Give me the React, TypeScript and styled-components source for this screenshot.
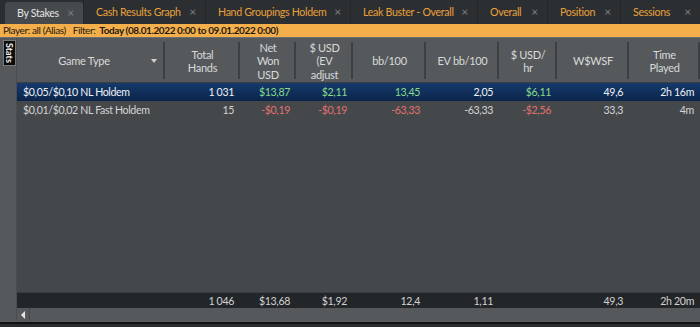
import React from "react";
import styled, { createGlobalStyle } from "styled-components";

const Global = createGlobalStyle`
  html, body { margin: 0; padding: 0; background: #1c1e20; }
  body { font-family: Lato, "Noto Sans", "Liberation Sans", sans-serif; }
  * { box-sizing: border-box; }
`;

const COLS = "148px 75px 56px 57px 73px 73px 58px 72px 71px";

const Root = styled.div`
  width: 700px;
  height: 327px;
  display: flex;
  flex-direction: column;
  background: #1c1e20;
  overflow: hidden;
  font-size: 10.5px;
  letter-spacing: -0.3px;
`;

const TabBar = styled.div`
  height: 24px;
  flex: none;
  display: flex;
  align-items: flex-end;
  background: #2b2e31;
  padding-left: 5px;
  white-space: nowrap;
`;

const Tab = styled.div<{ $active?: boolean; $w: number }>`
  width: ${(p) => p.$w}px;
  height: ${(p) => (p.$active ? "22px" : "24px")};
  display: flex;
  align-items: center;
  justify-content: space-between;
  padding: 0 9px 0 12px;
  background: ${(p) => (p.$active ? "#474a4d" : "#2c2f32")};
  border-radius: ${(p) => (p.$active ? "3px 3px 0 0" : "0")};
  border-left: ${(p) => (p.$active ? "none" : "1px solid #25282a")};
  color: ${(p) => (p.$active ? "#e4e4e4" : "#eaa03a")};
  font-size: 10.6px;
  letter-spacing: -0.3px;
  flex: none;
  overflow: hidden;
`;

const Close = styled.span`
  color: #7d8185;
  font-size: 12px;
  line-height: 1;
`;

const FilterBar = styled.div`
  height: 14px;
  flex: none;
  background: #f4ae4a;
  color: #1d1a14;
  font-size: 10px;
  letter-spacing: -0.4px;
  line-height: 13px;
  padding-left: 3px;
  white-space: nowrap;
  border-bottom: 1px solid #6b6e70;
`;

const Strong = styled.span<{ $bold?: boolean; $ml: number }>`
  font-weight: ${(p) => (p.$bold ? 700 : 400)};
  margin-left: ${(p) => p.$ml}px;
`;

const Main = styled.div`
  flex: 1;
  display: flex;
  min-height: 0;
`;

const SideStrip = styled.div`
  width: 17px;
  flex: none;
  background: #56595c;
  padding: 2px 0 0 3px;
  border-right: 1px solid #4a4d50;
`;

const StatsLabel = styled.div`
  width: 13px;
  height: 26px;
  background: #0c0c0c;
  color: #f2f2f2;
  font-size: 9px;
  letter-spacing: 0;
  font-weight: 700;
  writing-mode: vertical-rl;
  display: flex;
  align-items: center;
  justify-content: center;
  border: 1px solid #777;
`;

const Grid = styled.div`
  flex: 1;
  display: flex;
  flex-direction: column;
  min-width: 0;
`;

const HeaderRow = styled.div`
  height: 45px;
  flex: none;
  display: grid;
  grid-template-columns: ${COLS};
  background: #55595c;
  border-bottom: 1px solid #3c3f42;
`;

const HeadCell = styled.div<{ $pr?: number }>`
  position: relative;
  display: flex;
  align-items: center;
  justify-content: center;
  text-align: center;
  color: #d9d9d9;
  font-size: 11px;
  line-height: 13.5px;
  padding: 2px ${(p) => p.$pr ?? 0}px 0 0;
  overflow: hidden;
  &::after {
    content: "";
    position: absolute;
    right: 0;
    top: 4px;
    bottom: 3px;
    width: 2px;
    background: #3d4043;
  }
`;

const SortArrow = styled.span`
  position: absolute;
  right: 8px;
  top: 21px;
  width: 0;
  height: 0;
  border-left: 3.5px solid transparent;
  border-right: 3.5px solid transparent;
  border-top: 4px solid #d0d0d0;
`;

const Body = styled.div`
  flex: 1;
  background: #44484b;
  display: flex;
  flex-direction: column;
`;

const DataRow = styled.div<{ $selected?: boolean }>`
  height: 18px;
  display: grid;
  grid-template-columns: ${COLS};
  align-items: center;
  background: ${(p) =>
    p.$selected ? "linear-gradient(#163a6c, #0b2449)" : "transparent"};
  color: ${(p) => (p.$selected ? "#eef1f5" : "#d4d4d4")};
  font-size: 10.6px;
  letter-spacing: -0.35px;
`;

type Tone = "pos" | "neg" | undefined;

const Cell = styled.div<{ $left?: boolean; $tone?: Tone }>`
  text-align: ${(p) => (p.$left ? "left" : "right")};
  padding: ${(p) => (p.$left ? "0 0 0 6px" : "0 6px 0 0")};
  color: ${(p) =>
    p.$tone === "pos" ? "#86dc8a" : p.$tone === "neg" ? "#e3706c" : "inherit"};
  white-space: nowrap;
  overflow: hidden;
`;

const FooterRow = styled.div`
  height: 16px;
  flex: none;
  display: grid;
  grid-template-columns: ${COLS};
  align-items: center;
  background: #232629;
  color: #d2d2d2;
  font-size: 10.6px;
  letter-spacing: -0.35px;
  border-top: 1px solid #3a3d40;
`;

const ScrollBar = styled.div`
  height: 13px;
  flex: none;
  background: #56595c;
  display: flex;
`;

const ScrollBtn = styled.div`
  width: 13px;
  display: flex;
  align-items: center;
  justify-content: center;
  border-right: 1px solid #45484b;
`;

const LeftTri = styled.span`
  width: 0;
  height: 0;
  border-top: 4px solid transparent;
  border-bottom: 4px solid transparent;
  border-right: 4px solid #e6e6e6;
`;

const StatusEdge = styled.div`
  height: 6px;
  flex: none;
  border-top: 1px solid #5b5e61;
  background: linear-gradient(#0f1011 0 2px, #2a2c2e 2px);
`;

type Row = { cells: string[]; tones: Tone[]; selected?: boolean };

const rows: Row[] = [
  {
    selected: true,
    cells: ["$0,05/$0,10 NL Holdem", "1 031", "$13,87", "$2,11", "13,45", "2,05", "$6,11", "49,6", "2h 16m"],
    tones: [undefined, undefined, "pos", "pos", "pos", undefined, "pos", undefined, undefined],
  },
  {
    cells: ["$0,01/$0,02 NL Fast Holdem", "15", "-$0,19", "-$0,19", "-63,33", "-63,33", "-$2,56", "33,3", "4m"],
    tones: [undefined, undefined, "neg", "neg", "neg", undefined, "neg", undefined, undefined],
  },
];

const totals = ["", "1 046", "$13,68", "$1,92", "12,4", "1,11", "", "49,3", "2h 20m"];

const tabs: { label: string; w: number }[] = [
  { label: "Cash Results Graph", w: 122 },
  { label: "Hand Groupings Holdem", w: 145 },
  { label: "Leak Buster - Overall", w: 127 },
  { label: "Overall", w: 70 },
  { label: "Position", w: 73 },
  { label: "Sessions", w: 80 },
];

const headers: string[][] = [
  ["Total", "Hands"],
  ["Net", "Won", "USD"],
  ["$ USD", "(EV", "adjust"],
  ["bb/100"],
  ["EV bb/100"],
  ["$ USD/", "hr"],
  ["W$WSF"],
  ["Time", "Played"],
];

export default function App() {
  return (
    <Root>
      <Global />
      <TabBar>
        <Tab $active $w={78}>
          By Stakes <Close>×</Close>
        </Tab>
        {tabs.map((t) => (
          <Tab key={t.label} $w={t.w}>
            {t.label} <Close>×</Close>
          </Tab>
        ))}
      </TabBar>
      <FilterBar>
        Player: all (Alias)
        <Strong $ml={7}>Filter:</Strong>
        <Strong $ml={4} $bold>
          Today (08.01.2022 0:00 to 09.01.2022 0:00)
        </Strong>
      </FilterBar>
      <Main>
        <SideStrip>
          <StatsLabel>Stats</StatsLabel>
        </SideStrip>
        <Grid>
          <HeaderRow>
            <HeadCell $pr={14}>
              Game Type
              <SortArrow />
            </HeadCell>
            {headers.map((lines, i) => (
              <HeadCell key={i}>
                <div>
                  {lines.map((l, j) => (
                    <div key={j}>{l}</div>
                  ))}
                </div>
              </HeadCell>
            ))}
          </HeaderRow>
          <Body>
            {rows.map((r, i) => (
              <DataRow key={i} $selected={r.selected}>
                {r.cells.map((c, j) => (
                  <Cell key={j} $left={j === 0} $tone={r.tones[j]}>
                    {c}
                  </Cell>
                ))}
              </DataRow>
            ))}
          </Body>
          <FooterRow>
            {totals.map((t, j) => (
              <Cell key={j} $left={j === 0}>
                {t}
              </Cell>
            ))}
          </FooterRow>
          <ScrollBar>
            <ScrollBtn>
              <LeftTri />
            </ScrollBtn>
          </ScrollBar>
        </Grid>
      </Main>
      <StatusEdge />
    </Root>
  );
}
